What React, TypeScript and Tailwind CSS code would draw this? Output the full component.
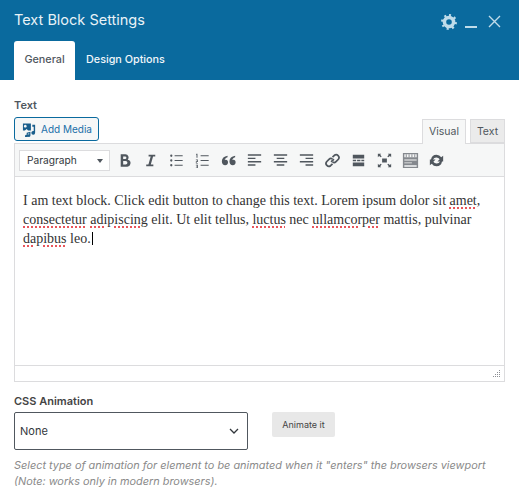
function Icon({ children }: { children: React.ReactNode }) {
  return (
    <span className="flex w-[26px] justify-center">
      <svg width="19" height="19" viewBox="0 0 20 20" fill="#50575e">
        {children}
      </svg>
    </span>
  );
}

function Wavy({ children }: { children: React.ReactNode }) {
  return <span className="underline decoration-dotted decoration-[#e8545a] decoration-[1.5px] underline-offset-2">{children}</span>;
}

function Toolbar() {
  return (
    <div className="flex h-[33px] items-center border-b border-[#dcdcde] bg-[#f6f7f7] pl-1 pt-px">
      <div className="mr-[1px] flex h-[21px] w-[91px] items-center justify-between border border-[#dcdcde] bg-white pl-[7px] pr-[6px] text-[10.2px] text-[#32373c]">
        <span>Paragraph</span>
        <span className="h-0 w-0 border-x-[3px] border-t-[4px] border-x-transparent border-t-[#50575e]" />
      </div>
      <Icon>
        <path d="M6 3.500h5a3.300 3.300 0 0 1 2.400 5.600A3.600 3.600 0 0 1 11.600 16.500H6zM8.600 5.700v2.800h2a1.400 1.400 0 0 0 0-2.800zM8.600 10.500v3.800h2.600a1.900 1.900 0 0 0 0-3.800z" />
      </Icon>
      <Icon>
        <path d="M8 4h7v1.800h-2.300l-2.400 8.400H13V16H5.500v-1.800h2.300l2.400-8.400H8z" />
      </Icon>
      <Icon>
        <circle cx="4.500" cy="5" r="1.200" />
        <circle cx="4.500" cy="10" r="1.200" />
        <circle cx="4.500" cy="15" r="1.200" />
        <path d="M8 4.500h8.500v1H8zM8 9.500h8.500v1H8zM8 14.500h8.500v1H8z" />
      </Icon>
      <Icon>
        <path d="M3.500 3h1.200v4h-1v-3h-.6zM3 9h2.200v2.500H3.800v1h1.400v.7H3v-2.300h1.400v-1.200H3zM3 14.500h2.200v3.500H3v-.7h1.400v-.7H3.400v-.6h1v-.8H3z" />
        <path d="M8 4.500h8.500v1H8zM8 9.500h8.500v1H8zM8 14.500h8.500v1H8z" />
      </Icon>
      <Icon>
        <path d="M9 5v1.500c-2 .6-2.800 1.600-3 3 .3-.2.700-.3 1.200-.3 1.500 0 2.300 1.100 2.300 2.600 0 1.700-1.200 3.200-3 3.200-2 0-3.500-1.600-3.500-4.200C3 7.700 5.300 5.600 9 5zM17 5v1.500c-2 .6-2.800 1.600-3 3 .3-.2.700-.3 1.200-.3 1.500 0 2.300 1.100 2.300 2.600 0 1.700-1.200 3.200-3 3.200-2 0-3.500-1.600-3.500-4.200C11 7.700 13.300 5.600 17 5z" />
      </Icon>
      <Icon>
        <path d="M3 3.500h14V5H3zM3 7h8v1.500H3zM3 10.500h14V12H3zM3 14h8v1.500H3z" />
      </Icon>
      <Icon>
        <path d="M3 3.500h14V5H3zM6 7h8v1.500H6zM3 10.500h14V12H3zM6 14h8v1.500H6z" />
      </Icon>
      <Icon>
        <path d="M3 3.500h14V5H3zM9 7h8v1.500H9zM3 10.500h14V12H3zM9 14h8v1.500H9z" />
      </Icon>
      <Icon>
        <g fill="none" stroke="#50575e" strokeWidth="1.800">
          <path d="M8.500 11.500l3-3" />
          <path d="M10 6.500l2-2a3 3 0 0 1 4.200 4.200l-2.500 2.500a3 3 0 0 1-3.700.4" />
          <path d="M10 13.500l-2 2a3 3 0 0 1-4.200-4.200l2.500-2.500a3 3 0 0 1 3.700-.4" />
        </g>
      </Icon>
      <Icon>
        <path d="M3 4h12v4H3zM3 9.250h3.500v1.500H3zM7.500 9.250h3.500v1.500H7.500zM12 9.250h3v1.500h-3zM3 12h12v4H3z" transform="translate(1 0)" />
      </Icon>
      <Icon>
        <path d="M7.500 8h5v4h-5zM3 3h3.500L5.500 4l1.500 1.800-.9.900L4.300 5.200 3 6.500zM17 3v3.500l-1.300-1.300-1.800 1.500-.9-.9L14.500 4l-1-1zM3 17v-3.500l1.300 1.300 1.800-1.500.9.900L5.500 16l1 1zM17 17h-3.500l1-1-1.500-1.800.9-.9 1.800 1.500 1.300-1.300z" />
      </Icon>
      <Icon>
        <path fillRule="evenodd" fill="#85898e" d="M2 2h16v16H2zM3.500 3.500v3h13v-3zM3.500 9v1h13V9zM3.500 12v1h8v-1zM3.500 15v1.500h13V15z" />
        <path fill="#85898e" d="M5 3.500h1v3H5zM8 3.500h1v3H8zM11 3.500h1v3h-1zM14 3.500h1v3h-1zM13 12h3.500v1H13z" />
      </Icon>
      <Icon>
        <path d="M10 4a6 6 0 0 1 5 2.700L17 5v6h-6l2.300-2.300A4 4 0 0 0 6.300 9H4.200A6 6 0 0 1 10 4zM10 16a6 6 0 0 1-5-2.700L3 15V9h6l-2.300 2.300A4 4 0 0 0 13.700 11h2.100A6 6 0 0 1 10 16z" />
      </Icon>
    </div>
  );
}

export default function App() {
  return (
    <div className="h-[503px] w-[519px] overflow-hidden bg-white font-['Inter','Liberation_Sans',sans-serif]">
      <header className="flex h-20 flex-col justify-between bg-[#0a6a9e]">
        <div className="flex items-start justify-between pl-[14px] pr-[18px] pt-[9px]">
          <h1 className="text-[14.5px] leading-[22px] text-[#e8f2f7]">Text Block Settings</h1>
          <div className="mt-[5px] flex items-start text-[#bfdcea]">
            <svg width="16" height="16" viewBox="0 0 20 20" fill="none" stroke="currentColor">
              <circle cx="10" cy="10" r="5.700" strokeWidth="4.400" />
              <path strokeWidth="3" strokeDasharray="2.500 4.180" d="M10 1.500a8.500 8.500 0 1 1-.01 0" />
            </svg>
            <span className="ml-[8px] mt-[12px] h-[2px] w-3 bg-current" />
            <svg className="ml-[11px] mt-[1px]" width="13" height="13" viewBox="0 0 13 13" stroke="currentColor" strokeWidth="1.400">
              <path d="M1 1l11 11M12 1L1 12" />
            </svg>
          </div>
        </div>
        <nav className="flex pl-[14px] text-[10.8px] font-medium">
          <span className="flex h-[39px] w-[61px] items-center justify-center rounded-t-[3px] bg-white text-[#50575e]">General</span>
          <span className="flex h-[39px] items-center px-[11px] text-[#f0f6fa]">Design Options</span>
        </nav>
      </header>

      <main className="px-[14px] pt-[18px]">
        <div className="text-[11px] font-semibold leading-[14px] text-[#50575e]">Text</div>
        <div className="-mb-px mt-[5px] flex items-end justify-between">
          <button className="mb-[3px] flex h-[24px] w-[85px] items-center whitespace-nowrap rounded-[3px] border border-[#0a6a9e] bg-[#f6f7f7] pl-[7px] text-[10px] text-[#1a6fa8]">
            <svg className="mr-[4px] shrink-0" width="15" height="15" viewBox="0 0 16 16" fill="#1a5e8c">
              <path fillRule="evenodd" d="M1 1.500h8.500v7.500H6.500L5 7.500 3 9H1zM3.500 3a1.500 1.500 0 1 0 .01 0z" />
              <path d="M11 3h3v8.500a2 2 0 1 1-1.500-1.900V5H11zM5 11.500l4-1v4a1.500 1.500 0 1 1-1.300-1.500v-1l-1.500.4V15a1.500 1.500 0 1 1-1.200-1.400z" />
            </svg>
            Add Media
          </button>
          <div className="flex gap-1 text-[10.5px] leading-[23px]">
            <span className="relative z-10 h-[25px] w-[44px] border border-b-0 border-[#dcdcde] bg-[#f6f7f7] text-center text-[#50575e]">Visual</span>
            <span className="h-[24px] w-[35px] border border-[#dcdcde] bg-[#ebebeb] text-center text-[#50575e]">Text</span>
          </div>
        </div>
        <div className="w-[491px] border border-[#dcdcde]">
          <Toolbar />
          <div className="h-[188px] px-2 pt-[14px] font-['Liberation_Serif',serif] text-[14px] leading-[19px] text-[#333]">
            I am text block. Click edit button to change this text. Lorem ipsum dolor sit <Wavy>amet</Wavy>, <Wavy>consectetur</Wavy> <Wavy>adipiscing</Wavy> elit. Ut elit tellus, <Wavy>luctus</Wavy> nec <Wavy>ullamcorper</Wavy> mattis, pulvinar <Wavy>dapibus</Wavy> leo.<span className="ml-px inline-block h-[13px] w-px translate-y-[2px] bg-black" />
          </div>
          <div className="flex h-[16px] items-center justify-end border-t border-[#dcdcde] pr-[3px]">
            <svg width="9" height="9" viewBox="0 0 9 9" fill="#8c8f94">
              <path d="M7 1h1v1H7zM7 3h1v1H7zM5 3h1v1H5zM7 5h1v1H7zM5 5h1v1H5zM3 5h1v1H3zM7 7h1v1H7zM5 7h1v1H5zM3 7h1v1H3zM1 7h1v1H1z" />
            </svg>
          </div>
        </div>

        <div className="mt-[12px] text-[11px] font-semibold leading-[14px] text-[#444]">CSS Animation</div>
        <div className="mt-[4px] flex items-start">
          <div className="flex h-[38px] w-[234px] items-center justify-between rounded-[2px] border border-[#50575e] pl-[5px] pr-[7px] text-[11px] text-[#32373c]">
            <span>None</span>
            <svg width="12" height="12" viewBox="0 0 12 12" fill="none" stroke="#32373c" strokeWidth="1.300">
              <path d="M2 4l4 4 4-4" />
            </svg>
          </div>
          <button className="ml-[24px] h-[25px] w-[63px] rounded-[2px] bg-[#e8e8e8] text-[9px] text-[#444]">Animate it</button>
        </div>
        <p className="mt-[7px] text-[10.9px] italic leading-[16px] text-[#8a8a8a]">
          Select type of animation for element to be animated when it "enters" the browsers viewport (Note: works only in modern browsers).
        </p>
      </main>
    </div>
  );
}
